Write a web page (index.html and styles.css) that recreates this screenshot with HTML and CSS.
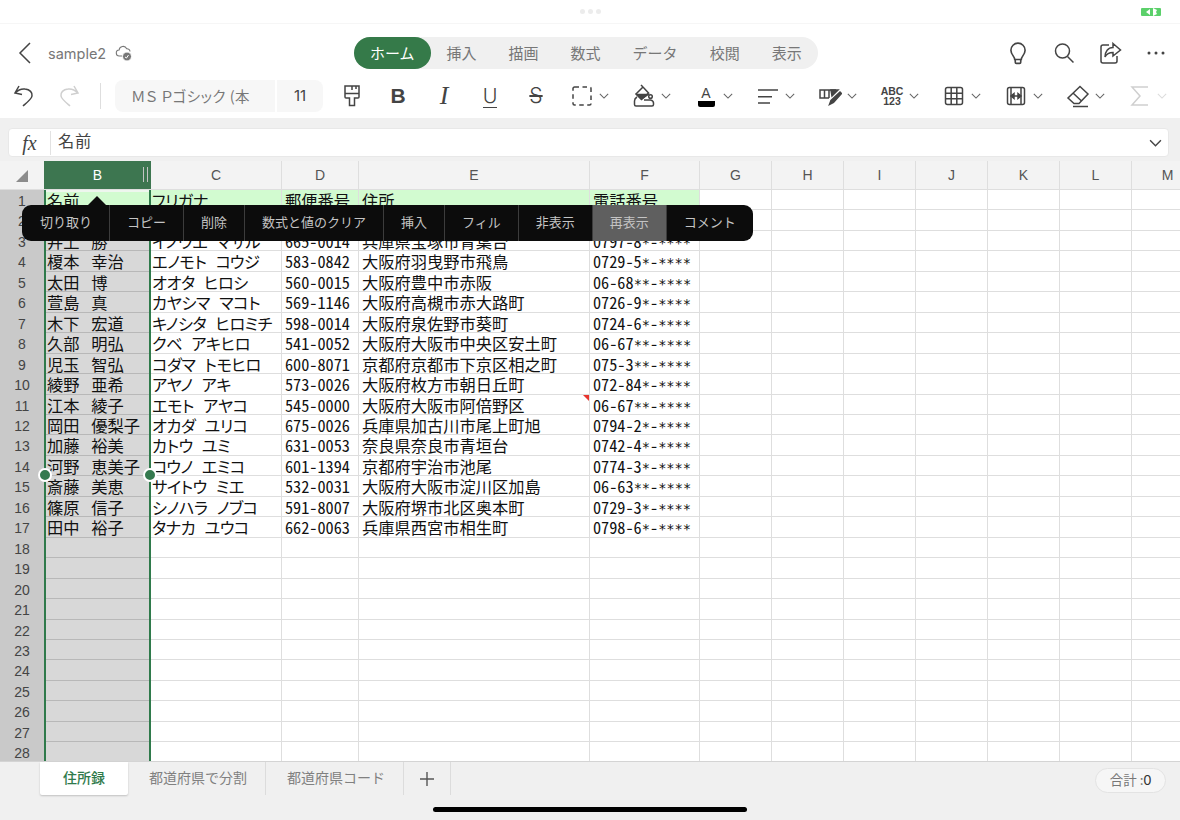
FILE: index.html
```html
<!DOCTYPE html>
<html lang="ja">
<head>
<meta charset="utf-8">
<title>sample2</title>
<link rel="stylesheet" href="styles.css">
</head>
<body>
<div class="app">
  <div class="status">
    <div class="dots"><i></i><i></i><i></i></div>
    <svg class="battery" width="20" height="8" viewBox="0 0 20 8"><rect width="20" height="8" rx="1" fill="#5bd06a"/><path d="M9 1 5 4l4 3zM12 0l4 2-1 2 1 2-4 2z" fill="#fff"/></svg>
  </div>

  <header class="titlebar">
    <div class="doc">
      <svg class="back" width="14" height="22" viewBox="0 0 14 22"><path d="M12 1 2 11l10 10" fill="none" stroke="#444" stroke-width="1.5"/></svg>
      <span class="docname">sample2</span>
      <svg class="cloud" width="18" height="18" viewBox="0 0 18 18"><path d="M8 12H4.500a3 3 0 0 1-.4-6 4 4 0 0 1 7.600-1.300A3 3 0 0 1 15 7.500" fill="none" stroke="#777" stroke-width="1.100"/><circle cx="12" cy="12.500" r="4.500" fill="#777" stroke="#fff"/><path d="m10 13 1.500 1 2-3" fill="none" stroke="#fff"/></svg>
    </div>
    <nav class="tabs">
      <span class="tab on">ホーム</span><span class="tab">挿入</span><span class="tab">描画</span><span class="tab">数式</span><span class="tab">データ</span><span class="tab">校閲</span><span class="tab">表示</span>
    </nav>
    <div class="actions">
      <span class="act"><svg class="ic" viewBox="1 1 22 22"><path d="M9 18c0-3-3.500-4.500-3.500-8.500a6.500 6.500 0 0 1 13 0C18.500 13.500 15 15 15 18zM9.500 18v2.500a1 1 0 0 0 1 1h3a1 1 0 0 0 1-1V18"/></svg></span>
      <span class="act"><svg class="ic" viewBox="0 0 24 24"><circle cx="10.500" cy="10" r="7"/><path d="m15.500 15.500 6 6"/></svg></span>
      <span class="act"><svg class="ic" viewBox="0 0 24 24"><path d="M11 4H5a2 2 0 0 0-2 2v14a2 2 0 0 0 2 2h12a2 2 0 0 0 2-2v-5"/><path d="M15 2.500 22.500 9 15 15v-3.500c-4 0-6.500 1.500-8 4.500 0-5.500 3-9.500 8-9.500z"/></svg></span>
      <span class="act"><svg class="ic" viewBox="0 0 24 24"><circle cx="5" cy="12" r="1.500" fill="#444" stroke="none"/><circle cx="12" cy="12" r="1.500" fill="#444" stroke="none"/><circle cx="19" cy="12" r="1.500" fill="#444" stroke="none"/></svg></span>
    </div>
  </header>

  <div class="toolbar">
    <span class="hist"><svg class="ic" viewBox="0 0 24 24"><path d="M7 2 3 9l7 1.500M3 9c3-3 6-4.500 10-4 5 .5 7.500 3.500 7 7-.5 3-5 6.500-9 10"/></svg></span>
    <span class="hist dim"><svg class="ic" viewBox="0 0 24 24"><path d="m17 2 4 7-7 1.500M21 9c-3-3-6-4.500-10-4-5 .5-7.500 3.500-7 7 .5 3 5 6.500 9 10"/></svg></span>
    <span class="vsep"></span>
    <span class="fontbox">ＭＳ Ｐゴシック (本</span>
    <span class="sizebox">11</span>
    <span class="tool"><svg class="ic" viewBox="0 0 24 24"><path d="M5 2h14v11a1 1 0 0 1-1 1h-3.500v7.500h-5V14H6a1 1 0 0 1-1-1zM5 9.500h14M12 2v4M16 2v3"/></svg></span>
    <span class="tool"><span class="t-b">B</span></span>
    <span class="tool"><span class="t-i">I</span></span>
    <span class="tool"><span class="t-u">U</span></span>
    <span class="tool"><span class="t-s">S</span></span>
    <span class="drop"><svg class="ic" viewBox="0 0 24 24"><path stroke-dasharray="4.500 3.500" d="M4.500 3h15a1.500 1.500 0 0 1 1.500 1.500v15a1.500 1.500 0 0 1-1.500 1.500h-15A1.500 1.500 0 0 1 3 19.500v-15A1.500 1.500 0 0 1 4.500 3z"/></svg><svg class="chev" viewBox="0 0 12 7"><path d="m1 1 5 5 5-5"/></svg></span>
    <span class="drop"><svg class="ic" viewBox="0 0 24 24"><path d="M11 3 4 10l5.500 5.500L16.500 9zM9 1l2 2"/><path d="M5 10.500h11L9.500 15z" fill="#444"/><path d="M5 13c-1.500.8-2.500 2-2.500 4v3.500A1.500 1.500 0 0 0 4 22h16a1.500 1.500 0 0 0 1.500-1.500V19c0-1.500-1-2.500-3-3H12"/><circle cx="18.500" cy="12.500" r="1.800"/></svg><svg class="chev" viewBox="0 0 12 7"><path d="m1 1 5 5 5-5"/></svg></span>
    <span class="drop"><span class="fcolor">A</span><svg class="chev" viewBox="0 0 12 7"><path d="m1 1 5 5 5-5"/></svg></span>
    <span class="drop"><svg class="ic" viewBox="0 0 24 24"><path d="M2 6h20M2 12.700h14M2 19h12"/></svg><svg class="chev" viewBox="0 0 12 7"><path d="m1 1 5 5 5-5"/></svg></span>
    <span class="drop"><svg class="ic" viewBox="0 0 24 24"><path d="M18 6H2v8h9M6.500 6v8M11 6v8"/><path d="M13 6h7l-2 2-4 4z" fill="#444"/><path d="m22 8 1.500 1.500-8 9-4 2 1.500-4z" fill="#444"/></svg><svg class="chev" viewBox="0 0 12 7"><path d="m1 1 5 5 5-5"/></svg></span>
    <span class="drop"><span class="abc"><span>ABC</span><span>123</span></span><svg class="chev" viewBox="0 0 12 7"><path d="m1 1 5 5 5-5"/></svg></span>
    <span class="drop"><svg class="ic" viewBox="0 0 24 24"><rect x="3.500" y="3.500" width="17" height="17" rx="2"/><path d="M9.200 3.500v17M14.800 3.500v17M3.500 9.200h17M3.500 14.800h17"/></svg><svg class="chev" viewBox="0 0 12 7"><path d="m1 1 5 5 5-5"/></svg></span>
    <span class="drop"><svg class="ic" viewBox="0 0 24 24"><rect x="3.500" y="3.500" width="17" height="17" rx="2"/><path d="M7 3.500v17M17 3.500v17M8 12h8"/><path d="m10 9.500-3 2.500 3 2.500zM14 9.500l3 2.500-3 2.500z" fill="#444"/></svg><svg class="chev" viewBox="0 0 12 7"><path d="m1 1 5 5 5-5"/></svg></span>
    <span class="drop"><svg class="ic" viewBox="0 0 24 24"><path d="M14 2.500 22 10l-9 9.500H8L2 14zM7 9l8.500 8"/><path d="M7 22.500h15"/></svg><svg class="chev" viewBox="0 0 12 7"><path d="m1 1 5 5 5-5"/></svg></span>
    <span class="drop dim"><svg class="ic" viewBox="0 0 24 24"><path d="M20 3H4l8 9-8 9h16"/></svg><svg class="chev" viewBox="0 0 12 7"><path d="m1 1 5 5 5-5"/></svg></span>
  </div>

  <div class="formulabar">
    <div class="formula">
      <span class="fx">fx</span>
      <span class="ftext">名前</span>
      <svg class="fchev" viewBox="0 0 12 7"><path d="m1 1 5 5 5-5"/></svg>
    </div>
  </div>

  <div class="sheet">
    <div class="colheads">
      <span class="corner"><i></i></span>
      <span class="ch b">B<i></i></span><span class="ch">C</span><span class="ch">D</span><span class="ch">E</span><span class="ch">F</span>
      <span class="ch">G</span><span class="ch">H</span><span class="ch">I</span><span class="ch">J</span><span class="ch">K</span><span class="ch">L</span><span class="ch">M</span>
    </div>
    <div class="rows">
      <div class="row head"><span class="rh">1</span><span class="c sel active">名前</span><span class="c k">フリガナ</span><span class="c n">郵便番号</span><span class="c">住所</span><span class="c n">電話番号</span><span class="rest"></span></div>
      <div class="row"><span class="rh">2</span><span class="c sel"></span><span class="c k"></span><span class="c n"></span><span class="c"></span><span class="c n"></span><span class="rest"></span></div>
      <div class="row"><span class="rh">3</span><span class="c sel">井上 勝</span><span class="c k">イノウエ マサル</span><span class="c n">665-0014</span><span class="c">兵庫県宝塚市青葉台</span><span class="c n">0797-8<span class="ast">*</span>-<span class="ast">****</span></span><span class="rest"></span></div>
      <div class="row"><span class="rh">4</span><span class="c sel">榎本 幸治</span><span class="c k">エノモト コウジ</span><span class="c n">583-0842</span><span class="c">大阪府羽曳野市飛鳥</span><span class="c n">0729-5<span class="ast">*</span>-<span class="ast">****</span></span><span class="rest"></span></div>
      <div class="row"><span class="rh">5</span><span class="c sel">太田 博</span><span class="c k">オオタ ヒロシ</span><span class="c n">560-0015</span><span class="c">大阪府豊中市赤阪</span><span class="c n">06-68<span class="ast">**</span>-<span class="ast">****</span></span><span class="rest"></span></div>
      <div class="row"><span class="rh">6</span><span class="c sel">萱島 真</span><span class="c k">カヤシマ マコト</span><span class="c n">569-1146</span><span class="c">大阪府高槻市赤大路町</span><span class="c n">0726-9<span class="ast">*</span>-<span class="ast">****</span></span><span class="rest"></span></div>
      <div class="row"><span class="rh">7</span><span class="c sel">木下 宏道</span><span class="c k">キノシタ ヒロミチ</span><span class="c n">598-0014</span><span class="c">大阪府泉佐野市葵町</span><span class="c n">0724-6<span class="ast">*</span>-<span class="ast">****</span></span><span class="rest"></span></div>
      <div class="row"><span class="rh">8</span><span class="c sel">久部 明弘</span><span class="c k">クベ アキヒロ</span><span class="c n">541-0052</span><span class="c">大阪府大阪市中央区安土町</span><span class="c n">06-67<span class="ast">**</span>-<span class="ast">****</span></span><span class="rest"></span></div>
      <div class="row"><span class="rh">9</span><span class="c sel">児玉 智弘</span><span class="c k">コダマ トモヒロ</span><span class="c n">600-8071</span><span class="c">京都府京都市下京区相之町</span><span class="c n">075-3<span class="ast">**</span>-<span class="ast">****</span></span><span class="rest"></span></div>
      <div class="row"><span class="rh">10</span><span class="c sel">綾野 亜希</span><span class="c k">アヤノ アキ</span><span class="c n">573-0026</span><span class="c">大阪府枚方市朝日丘町</span><span class="c n">072-84<span class="ast">*</span>-<span class="ast">****</span></span><span class="rest"></span></div>
      <div class="row"><span class="rh">11</span><span class="c sel">江本 綾子</span><span class="c k">エモト アヤコ</span><span class="c n">545-0000</span><span class="c note">大阪府大阪市阿倍野区</span><span class="c n">06-67<span class="ast">**</span>-<span class="ast">****</span></span><span class="rest"></span></div>
      <div class="row"><span class="rh">12</span><span class="c sel">岡田 優梨子</span><span class="c k">オカダ ユリコ</span><span class="c n">675-0026</span><span class="c">兵庫県加古川市尾上町旭</span><span class="c n">0794-2<span class="ast">*</span>-<span class="ast">****</span></span><span class="rest"></span></div>
      <div class="row"><span class="rh">13</span><span class="c sel">加藤 裕美</span><span class="c k">カトウ ユミ</span><span class="c n">631-0053</span><span class="c">奈良県奈良市青垣台</span><span class="c n">0742-4<span class="ast">*</span>-<span class="ast">****</span></span><span class="rest"></span></div>
      <div class="row"><span class="rh">14</span><span class="c sel">河野 恵美子</span><span class="c k">コウノ エミコ</span><span class="c n">601-1394</span><span class="c">京都府宇治市池尾</span><span class="c n">0774-3<span class="ast">*</span>-<span class="ast">****</span></span><span class="rest"></span></div>
      <div class="row"><span class="rh">15</span><span class="c sel">斎藤 美恵</span><span class="c k">サイトウ ミエ</span><span class="c n">532-0031</span><span class="c">大阪府大阪市淀川区加島</span><span class="c n">06-63<span class="ast">**</span>-<span class="ast">****</span></span><span class="rest"></span></div>
      <div class="row"><span class="rh">16</span><span class="c sel">篠原 信子</span><span class="c k">シノハラ ノブコ</span><span class="c n">591-8007</span><span class="c">大阪府堺市北区奥本町</span><span class="c n">0729-3<span class="ast">*</span>-<span class="ast">****</span></span><span class="rest"></span></div>
      <div class="row"><span class="rh">17</span><span class="c sel">田中 裕子</span><span class="c k">タナカ ユウコ</span><span class="c n">662-0063</span><span class="c">兵庫県西宮市相生町</span><span class="c n">0798-6<span class="ast">*</span>-<span class="ast">****</span></span><span class="rest"></span></div>
      <div class="row"><span class="rh">18</span><span class="c sel"></span><span class="c"></span><span class="c"></span><span class="c"></span><span class="c"></span><span class="rest"></span></div>
      <div class="row"><span class="rh">19</span><span class="c sel"></span><span class="c"></span><span class="c"></span><span class="c"></span><span class="c"></span><span class="rest"></span></div>
      <div class="row"><span class="rh">20</span><span class="c sel"></span><span class="c"></span><span class="c"></span><span class="c"></span><span class="c"></span><span class="rest"></span></div>
      <div class="row"><span class="rh">21</span><span class="c sel"></span><span class="c"></span><span class="c"></span><span class="c"></span><span class="c"></span><span class="rest"></span></div>
      <div class="row"><span class="rh">22</span><span class="c sel"></span><span class="c"></span><span class="c"></span><span class="c"></span><span class="c"></span><span class="rest"></span></div>
      <div class="row"><span class="rh">23</span><span class="c sel"></span><span class="c"></span><span class="c"></span><span class="c"></span><span class="c"></span><span class="rest"></span></div>
      <div class="row"><span class="rh">24</span><span class="c sel"></span><span class="c"></span><span class="c"></span><span class="c"></span><span class="c"></span><span class="rest"></span></div>
      <div class="row"><span class="rh">25</span><span class="c sel"></span><span class="c"></span><span class="c"></span><span class="c"></span><span class="c"></span><span class="rest"></span></div>
      <div class="row"><span class="rh">26</span><span class="c sel"></span><span class="c"></span><span class="c"></span><span class="c"></span><span class="c"></span><span class="rest"></span></div>
      <div class="row"><span class="rh">27</span><span class="c sel"></span><span class="c"></span><span class="c"></span><span class="c"></span><span class="c"></span><span class="rest"></span></div>
      <div class="row"><span class="rh">28</span><span class="c sel"></span><span class="c"></span><span class="c"></span><span class="c"></span><span class="c"></span><span class="rest"></span></div>

      <div class="selection"><i class="grip l"></i><i class="grip r"></i></div>
    </div>
    <div class="menu">
      <span class="mi">切り取り</span><span class="mi">コピー</span><span class="mi">削除</span><span class="mi">数式と値のクリア</span><span class="mi">挿入</span><span class="mi">フィル</span><span class="mi">非表示</span><span class="mi on">再表示</span><span class="mi">コメント</span>
    </div>
  </div>

  <footer class="footer">
    <div class="sheets">
      <span class="st on">住所録</span><span class="st">都道府県で分割</span><span class="st">都道府県コード</span><span class="st add"><svg width="16" height="16" viewBox="0 0 16 16"><path d="M8 1v14M1 8h14" stroke="#555" stroke-width="1.400"/></svg></span>
    </div>
    <span class="sum">合計 :<b>0</b></span>
    <i class="homebar"></i>
  </footer>
</div>
</body>
</html>
```

FILE: styles.css
```css
* { box-sizing: border-box; }
html, body { margin: 0; height: 100%; }
body { font-family: "Noto Sans CJK JP", "Noto Sans", sans-serif; overflow: hidden; background: #fff; }
.app { width: 1180px; height: 820px; display: flex; flex-direction: column; overflow: hidden; }

.status { height: 24px; flex: none; display: flex; align-items: center; justify-content: center; position: relative; border-bottom: 1px solid #f6f6f6; }
.dots { display: flex; gap: 3px; }
.dots i { width: 5px; height: 5px; border-radius: 50%; background: #ececec; }
.battery { position: absolute; right: 19px; top: 8px; }

.titlebar { height: 54px; flex: none; display: flex; align-items: center; padding-top: 4px; }
.doc { flex: 0 0 354px; display: flex; align-items: center; padding-left: 18px; }
.docname { margin-left: 16px; font: 14.500px Inter, "Noto Sans", sans-serif; color: #777; }
.cloud { margin-left: 9px; }
.tabs { display: flex; height: 32px; background: #f0f0f0; border-radius: 16px; align-items: center; }
.tab { padding: 0 16px; font-size: 15px; line-height: 32px; color: #777; white-space: nowrap; }
.tab.on { background: #357a49; color: #fff; border-radius: 16px; }
.actions { margin-left: auto; display: flex; padding-right: 1px; }
.act { width: 46px; display: flex; justify-content: center; }

.ic { width: 24px; height: 24px; fill: none; stroke: #444; stroke-width: 1.500; flex: none; display: block; }
.chev { width: 10px; height: 6px; fill: none; stroke: #666; stroke-width: 1.300; flex: none; }

.toolbar { height: 40px; flex: none; display: flex; align-items: center; padding-bottom: 4px; }
.hist { width: 24px; margin-left: 12px; margin-right: 21px; display: flex; justify-content: center; }
.hist + .hist { margin-left: 0; margin-right: 19px; }
.dim .ic { stroke: #cfcfcf; }
.dim .chev { stroke: #dcdcdc; }
.vsep { width: 1px; height: 26px; background: #dedede; margin-right: 14px; }
.fontbox { width: 160px; height: 32px; background: #f7f7f7; border-radius: 8px 0 0 8px; margin-right: 2px; padding-left: 16px; line-height: 32px; font-size: 14.500px; color: #777; white-space: nowrap; overflow: hidden; font-feature-settings: "palt"; letter-spacing: .5px; }
.sizebox { width: 46px; height: 32px; background: #f7f7f7; border-radius: 0 8px 8px 0; text-align: center; font: 15px/32px Inter, sans-serif; color: #444; margin-right: 6px; }
.tool { width: 46px; height: 32px; display: flex; align-items: center; justify-content: center; color: #444; }
.t-b { font: 700 21px/24px "Liberation Sans", sans-serif; }
.t-i { font: italic 400 26px/24px "Liberation Serif", serif; }
.t-u { font: 300 20px/22px Inter, sans-serif; border-bottom: 1.500px solid #444; }
.t-s { font: 300 21px/24px Inter, sans-serif; text-decoration: line-through; text-decoration-thickness: 1.500px; }
.drop { width: 62px; height: 32px; display: flex; align-items: center; padding-left: 11px; gap: 5px; color: #444; }
.fcolor { width: 17px; height: 21px; margin: 0 3.500px; flex: none; text-align: center; font: 14px/15px "Liberation Sans", sans-serif; border-bottom: 6px solid #000; border-radius: 0 0 2px 2px; }
.abc { width: 24px; flex: none; font: 700 10.500px/10.500px "Liberation Sans", sans-serif; text-align: center; white-space: nowrap; display: flex; flex-direction: column; }

.formulabar { height: 43px; flex: none; background: #f0f0f0; padding: 10px 11px 0 8px; }
.formula { height: 29px; background: #fff; border: 1px solid #e8e8e8; border-radius: 4px; display: flex; align-items: center; }
.fx { width: 42px; height: 24px; border-right: 1px solid #e2e2e2; font: italic 20px/24px "Liberation Serif", serif; color: #444; text-align: center; flex: none; }
.ftext { margin-left: 7px; font-size: 16.250px; letter-spacing: .8px; color: #444; flex: 1; line-height: 22px; height: 27px; padding-bottom: 5px; align-self: flex-start; }
.fchev { width: 13px; height: 8px; fill: none; stroke: #444; stroke-width: 1.300; margin-right: 6px; }

.sheet { flex: 1; min-height: 0; position: relative; overflow: hidden; }
.colheads { height: 29px; display: grid; grid-template-columns: 44px 107px 131px 77px 231px 110px repeat(7, 72px); background: #f3f3f3; border-bottom: 1px solid #dedede; }
.corner { background: #f3f3f3; }
.corner i { display: block; width: 0; height: 0; margin: 9px 0 0 16px; border-left: 12px solid transparent; border-bottom: 12px solid #8c8c8c; }
.ch { font: 14px/28px "Liberation Sans", sans-serif; color: #555; text-align: center; border-right: 1px solid #dedede; position: relative; white-space: nowrap; }
.ch.b { background: #3d7650; color: #fff; border-right: 0; }
.ch.b i { position: absolute; right: 3px; top: 6px; width: 5px; height: 15px; border-left: 1.500px solid #c4c4c4; border-right: 1.500px solid #c4c4c4; }

.rows { height: 571px; display: grid; grid-auto-rows: 20.460px; position: relative; }
.row { display: grid; grid-template-columns: 44px 107px 131px 77px 231px 110px 1fr; min-height: 0; }
.rh { background: #c9c9c9; font: 14px/22px "Liberation Sans", sans-serif; color: #444; text-align: center; overflow: hidden; }
.c { font-size: 16.250px; line-height: 21px; color: #111; padding-left: 3px; white-space: nowrap; overflow: hidden; border-right: 1px solid #dedede; border-bottom: 1px solid #dedede; position: relative; }
.c.sel { background: #d8d8d8; border-right: 0; border-bottom-color: #b8b8b8; word-spacing: 8px; }
.c.k { font-feature-settings: "palt"; padding-left: 1px; letter-spacing: -.5px; word-spacing: 6px; }
.c.n { font-feature-settings: "hwid"; }
.ast { font: 13.700px/1 "DejaVu Sans Mono", monospace; }
.c.active { background: #d2fbd0; box-shadow: inset 0 0 0 2px #eef6ee; }
.head .c:not(.sel) { background: #d2fbd0; }
.rest { border-bottom: 1px solid #dedede; background: repeating-linear-gradient(to right, transparent 0 71px, #dedede 71px 72px); }
.note::after { content: ""; position: absolute; right: 0; top: 0; border-top: 6px solid #e8352e; border-left: 6px solid transparent; }

.selection { position: absolute; left: 44px; top: 0; bottom: 0; width: 107px; border-left: 2px solid #2f7a4b; border-right: 2px solid #2f7a4b; pointer-events: none; }
.grip { position: absolute; top: 278px; width: 14px; height: 14px; border-radius: 50%; background: #357a4f; border: 2px solid #fff; }
.grip.l { left: -8px; }
.grip.r { right: -8px; }

.menu { position: absolute; left: 22px; top: 44px; height: 36px; display: flex; background: #0c0c0c; border-radius: 9px; }
.menu::before { content: ""; position: absolute; left: 66px; top: -9px; border-left: 9px solid transparent; border-right: 9px solid transparent; border-bottom: 9px solid #0c0c0c; }
.mi { padding: 0 17px; font-size: 13px; line-height: 34px; color: #c4c4c4; border-right: 1px solid #3c3c3c; white-space: nowrap; }
.mi:first-child { padding-left: 18px; }
.mi:last-child { border-right: 0; border-radius: 0 9px 9px 0; }
.mi.on { background: #5f5f5f; }

.footer { height: 59px; flex: none; background: #f0f0f0; border-top: 1px solid #d4d4d4; position: relative; display: flex; justify-content: space-between; align-items: flex-start; padding: 0 14px 0 40px; }
.sheets { display: flex; height: 33px; }
.st { padding: 0 18px 0 21px; font-size: 14px; line-height: 30px; color: #808080; border-right: 1px solid #dcdcdc; white-space: nowrap; }
.st.on { width: 88px; padding: 0; text-align: center; background: #fff; color: #2f7a4b; font-weight: 500; border-right: 0; border-radius: 0 0 2px 2px; box-shadow: 0 1px 2px rgba(0,0,0,.2); }
.st.add { width: 47px; padding: 0; display: flex; align-items: center; justify-content: center; }
.sum { margin-top: 6px; width: 71px; height: 25px; border: 1px solid #e3e3e3; border-radius: 13px; background: #f6f6f6; text-align: center; font-size: 13.500px; line-height: 21px; color: #777; }
.sum b { font: 400 14px "Liberation Sans", sans-serif; color: #333; }
.homebar { position: absolute; left: 433px; bottom: 8px; width: 314px; height: 5px; border-radius: 3px; background: #000; }
```
